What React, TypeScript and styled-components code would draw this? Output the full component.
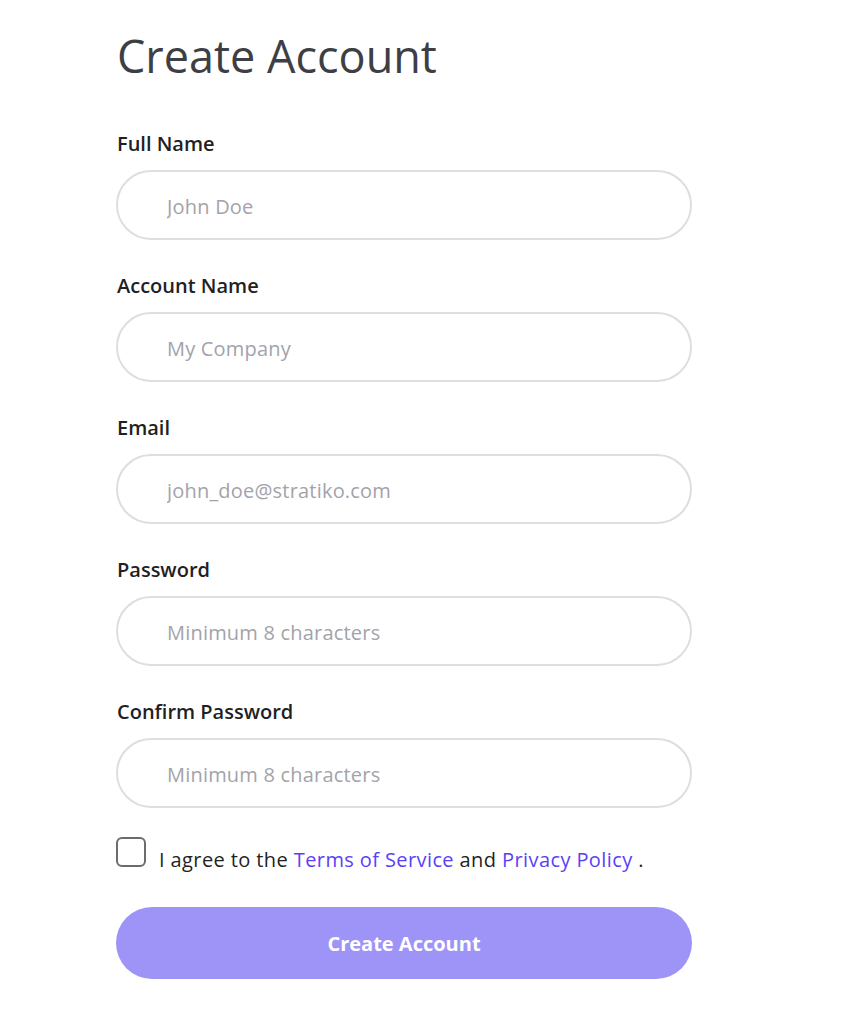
import styled, { createGlobalStyle } from "styled-components";

const GlobalStyle = createGlobalStyle`
  body {
    margin: 0;
    background: #ffffff;
    font-family: "Open Sans", "Noto Sans", sans-serif;
  }
`;

const fields = [
  { label: "Full Name", placeholder: "John Doe", type: "text" },
  { label: "Account Name", placeholder: "My Company", type: "text" },
  { label: "Email", placeholder: "john_doe@stratiko.com", type: "email" },
  { label: "Password", placeholder: "Minimum 8 characters", type: "password" },
  { label: "Confirm Password", placeholder: "Minimum 8 characters", type: "password" },
];

export default function App() {
  return (
    <>
      <GlobalStyle />
      <Page>
        <Form onSubmit={(e) => e.preventDefault()}>
          <Title>Create Account</Title>
          {fields.map((f) => (
            <Field key={f.label}>
              <Label>{f.label}</Label>
              <Input type={f.type} placeholder={f.placeholder} />
            </Field>
          ))}
          <AgreeRow>
            <Checkbox type="checkbox" />
            <AgreeText>
              I agree to the <Link href="#">Terms of Service</Link> and{" "}
              <Link href="#">Privacy Policy</Link> .
            </AgreeText>
          </AgreeRow>
          <SubmitBtn type="submit">Create Account</SubmitBtn>
        </Form>
      </Page>
    </>
  );
}

const Page = styled.div`
  padding: 26px 0 0 116px;
`;

const Form = styled.form`
  width: 576px;
  display: flex;
  flex-direction: column;
`;

const Title = styled.h1`
  margin: 0 0 46px 1px;
  font-size: 45px;
  font-weight: 400;
  line-height: 60px;
  color: #3d3f44;
`;

const Field = styled.div`
  display: flex;
  flex-direction: column;
  margin-bottom: 34px;
`;

const Label = styled.label`
  padding-left: 1px;
  font-size: 20px;
  font-weight: 600;
  line-height: 24px;
  color: #1f1f24;
  margin-bottom: 14px;
`;

const Input = styled.input`
  box-sizing: border-box;
  width: 100%;
  height: 70px;
  padding: 2px 49px 0;
  border: 2px solid #dedee2;
  border-radius: 35px;
  font-family: "Open Sans", "Noto Sans", sans-serif;
  font-size: 20px;
  letter-spacing: 0.2px;
  color: #1f1f24;
  outline: none;
  &::placeholder {
    color: #a3a3aa;
  }
  &:focus {
    border-color: #9d93f7;
  }
`;

const AgreeRow = styled.div`
  display: flex;
  align-items: flex-start;
  gap: 13px;
  margin-top: -5px;
`;

const Checkbox = styled.input`
  appearance: none;
  flex-shrink: 0;
  margin: 0;
  width: 30px;
  height: 30px;
  border: 2px solid #6b6b70;
  border-radius: 6px;
  box-sizing: border-box;
  cursor: pointer;
  &:checked {
    background: #5b3ff5;
    border-color: #5b3ff5;
  }
`;

const AgreeText = styled.span`
  font-size: 20px;
  line-height: 28px;
  letter-spacing: 0.4px;
  color: #1f1f24;
  padding-top: 9px;
`;

const Link = styled.a`
  color: #5b3ff5;
  text-decoration: none;
`;

const SubmitBtn = styled.button`
  margin-top: 33px;
  height: 72px;
  width: 100%;
  border: none;
  border-radius: 36px;
  background: #9e93f7;
  color: #ffffff;
  font-family: "Open Sans", "Noto Sans", sans-serif;
  font-size: 20px;
  font-weight: 700;
  cursor: pointer;
`;
